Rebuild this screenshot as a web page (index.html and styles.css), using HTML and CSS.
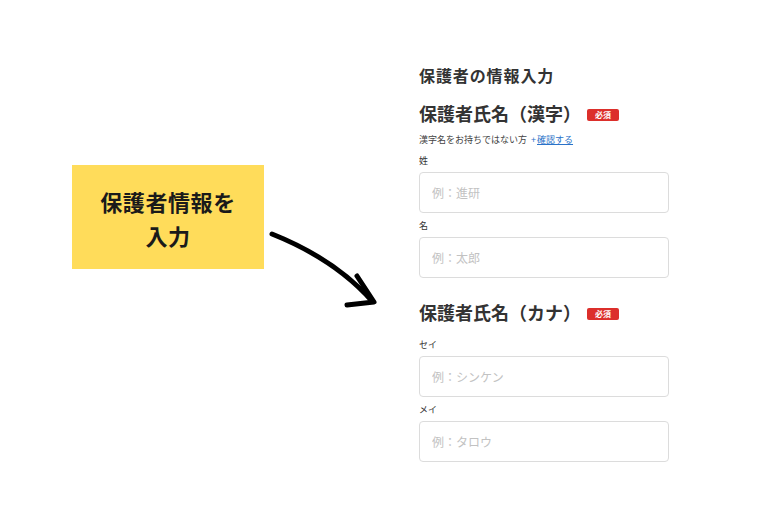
FILE: index.html
```html
<!DOCTYPE html>
<html lang="ja">
<head>
<meta charset="utf-8">
<title>保護者の情報入力</title>
<link rel="stylesheet" href="styles.css">
</head>
<body>
<div class="page">
  <div class="side">
    <div class="callout">保護者情報を<br>入力</div>
  </div>
  <form class="form">
    <div class="title">保護者の情報入力</div>
    <div class="heading"><span>保護者氏名（漢字）</span><span class="badge">必須</span></div>
    <div class="note">漢字名をお持ちではない方<a class="link"><span class="plus">+</span><span class="u">確認する</span></a></div>
    <div class="field first">
      <div class="label">姓</div>
      <input class="input" type="text" placeholder="例：進研">
    </div>
    <div class="field">
      <div class="label">名</div>
      <input class="input" type="text" placeholder="例：太郎">
    </div>
    <div class="heading second"><span>保護者氏名（カナ）</span><span class="badge">必須</span></div>
    <div class="field first-k">
      <div class="label">セイ</div>
      <input class="input" type="text" placeholder="例：シンケン">
    </div>
    <div class="field">
      <div class="label">メイ</div>
      <input class="input" type="text" placeholder="例：タロウ">
    </div>
  </form>
  <svg class="arrow" width="770" height="520" viewBox="0 0 770 520">
    <path d="M272 234 C302 246 342 267 372 301" fill="none" stroke="#000" stroke-width="5" stroke-linecap="round"/>
    <path d="M357 276 L374 302 L347 305" fill="none" stroke="#000" stroke-width="5" stroke-linecap="round" stroke-linejoin="round"/>
  </svg>
</div>
</body>
</html>
```
FILE: styles.css
```css
* { box-sizing: border-box; }
html, body { margin: 0; padding: 0; background: #fff; }
body {
  font-family: "Noto Sans CJK JP", "Noto Sans", sans-serif;
  color: #333;
}
.page {
  position: relative;
  width: 770px;
  height: 520px;
  display: flex;
}
.side {
  width: 419px;
  padding-top: 165px;
  padding-left: 72px;
}
.callout {
  width: 192px;
  height: 104px;
  background: #ffdc5a;
  color: #1a1a1a;
  font-weight: 700;
  font-size: 22px;
  line-height: 34px;
  letter-spacing: 0.6px;
  text-align: center;
  padding-top: 19px;
}
.form {
  width: 250px;
  padding-top: 63px;
  margin: 0;
  display: flex;
  flex-direction: column;
}
.title {
  font-size: 16px;
  line-height: 24px;
  font-weight: 700;
  letter-spacing: 0.9px;
  color: #333;
}
.heading {
  display: flex;
  align-items: center;
  margin-top: 14px;
  font-size: 18px;
  line-height: 24px;
  font-weight: 700;
  color: #333;
}
.heading.second { margin-top: 22px; }
.badge {
  display: inline-block;
  margin-left: 6px;
  margin-top: 3px;
  width: 32px;
  height: 12px;
  border-radius: 2px;
  background: #dc2f2b;
  color: #fff;
  font-size: 8px;
  line-height: 12px;
  font-weight: 700;
  text-align: center;
}
.note {
  margin-top: 8px;
  font-size: 9px;
  line-height: 14px;
  color: #444;
}
.link { color: #2a72c8; margin-left: 4px; }
.link .plus { margin-right: 1px; }
.link .u { text-decoration: underline; }
.field { margin-top: 6px; display: flex; flex-direction: column; }
.field.first { margin-top: 7px; }
.field.first-k { margin-top: 14px; }
.label {
  font-size: 9px;
  line-height: 14px;
  color: #333;
  margin-bottom: 4px;
}
.input {
  width: 250px;
  height: 41px;
  border: 1px solid #dcdcdc;
  border-radius: 4px;
  padding: 0 12px;
  font-family: "Noto Sans CJK JP", "Noto Sans", sans-serif;
  font-size: 12px;
  color: #333;
  background: #fff;
  outline: none;
}
.input::placeholder { color: #c2c2c2; }
.arrow {
  position: absolute;
  left: 0;
  top: 0;
  pointer-events: none;
}
```
